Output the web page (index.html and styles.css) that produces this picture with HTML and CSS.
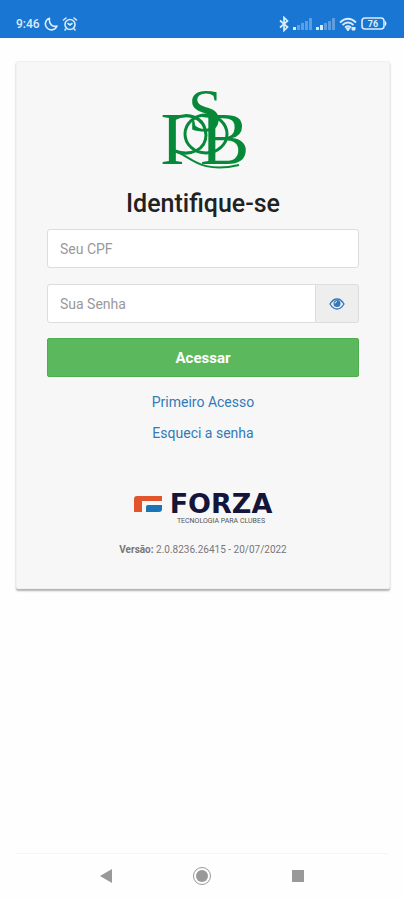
FILE: index.html
```
<!DOCTYPE html>
<html lang="pt-BR">
<head>
  <meta charset="UTF-8" />
  <title>Identifique-se</title>
  <meta name="viewport" content="width=device-width, initial-scale=1.0" />
  <link rel="stylesheet" href="styles.css">
</head>
<body>
  <header class="status-bar">
    <div class="status-group">
      <span class="clock">9:46</span>
      <svg width="14" height="14" viewBox="0 0 14 14" fill="none" stroke="currentColor" stroke-width="1.6" stroke-linejoin="round">
        <path d="M5.5 1.2A6 6 0 1 0 13 9C8.500 10.500 4.500 7 5.500 1.200Z" />
      </svg>
      <svg class="alarm" width="16" height="14" viewBox="0 0 16 14" fill="none" stroke="currentColor" stroke-width="1.6" stroke-linecap="round">
        <circle cx="8" cy="7.500" r="5" />
        <path d="M1.500 3 4 1M14.500 3 12 1M3.800 12 3 13M12.200 12 13 13M6 6.500 8 8 10 6.500" />
      </svg>
    </div>
    <div class="status-group">
      <svg width="10" height="16" viewBox="0 0 10 16" fill="none" stroke="currentColor" stroke-width="1.700">
        <path d="M1 4.500 8.500 11 5 14.500V1.500L8.500 5 1 11.500" />
      </svg>
      <svg width="19" height="12" viewBox="0 0 19 12" fill="currentColor">
        <path d="M0 9h3v3H0z" />
        <path opacity=".35" d="M4 7h3v5H4zM8 5h3v7H8zM12 3h3v9h-3zM16 0h3v12h-3z" />
      </svg>
      <svg width="19" height="12" viewBox="0 0 19 12" fill="currentColor">
        <path d="M0 9h3v3H0zM4 7h3v5H4z" />
        <path opacity=".35" d="M8 5h3v7H8zM12 3h3v9h-3zM16 0h3v12h-3z" />
      </svg>
      <svg width="18" height="15" viewBox="0 0 18 15" fill="none" stroke="currentColor" stroke-width="1.800">
        <path d="M1 5.500Q9-2 17 5.500M3.500 8Q9 3 14.500 8M6 10.500Q9 8 12 10.500" />
        <path d="M7 11h4l-2 3zM13 10v3h3v-3" fill="currentColor" stroke-width="1" />
      </svg>
      <svg width="27" height="14" viewBox="0 0 27 14">
        <rect x="1" y="1" width="22" height="11" rx="3" fill="none" stroke="currentColor" stroke-width="1.600" />
        <path d="M24 3.500q3 3 0 6z" fill="currentColor" />
        <text class="battery-level" x="12" y="10" text-anchor="middle">76</text>
      </svg>
    </div>
  </header>

  <main class="content">
    <form class="login-card">
      <svg class="club-logo" width="84" height="82" viewBox="0 0 84 82" role="img" aria-label="RSB">
        <g class="club-letters">
          <text x="-1" y="75" font-size="74">I</text>
          <text x="27" y="42" font-size="62">S</text>
          <text x="39" y="75" font-size="74">B</text>
        </g>
        <g class="club-curves">
          <path d="M13 30C26 23 44 27 45 46 45 60 30 68 14 62" />
          <ellipse cx="45" cy="45" rx="21" ry="19" />
          <path stroke-width="2" d="M12 62C28 64 36 86 78 76" />
        </g>
      </svg>

      <h1>Identifique-se</h1>

      <input class="field" type="text" placeholder="Seu CPF" aria-label="Seu CPF">

      <div class="password-group">
        <input class="field" type="password" placeholder="Sua Senha" aria-label="Sua Senha">
        <button class="toggle-password" type="button" aria-label="Mostrar senha">
          <svg width="16" height="12" viewBox="0 0 16 12" fill="none" stroke="currentColor">
            <path d="M1 6Q4 1 8 1t7 5Q12 11 8 11T1 6Z" stroke-width="1.300" />
            <circle cx="8" cy="5.500" r="3.500" fill="currentColor" stroke="none" />
            <path d="M6 5.500Q6 3.500 8 3.500" stroke="#eee" />
          </svg>
        </button>
      </div>

      <button class="submit" type="submit">Acessar</button>

      <nav class="links">
        <a href="#">Primeiro Acesso</a>
        <a href="#">Esqueci a senha</a>
      </nav>

      <div class="brand">
        <svg width="28" height="16" viewBox="0 0 28 16">
          <path fill="#e2542c" d="M3 0h25v5H8v11H0V3q0-3 3-3z" />
          <path fill="#1b75b4" d="M14 9h14v4q0 3-3 3H12v-5q0-2 2-2z" />
        </svg>
        <span class="brand-name">FORZA</span>
        <span class="brand-tagline">TECNOLOGIA PARA CLUBES</span>
      </div>

      <p class="version"><strong>Versão:</strong> 2.0.8236.26415 - 20/07/2022</p>
    </form>
  </main>

  <footer class="nav-bar">
    <button type="button" aria-label="Voltar">
      <svg width="20" height="20" viewBox="0 0 20 20"><path fill="currentColor" d="M16 3v14L4 10z" /></svg>
    </button>
    <button type="button" aria-label="Início">
      <svg width="20" height="20" viewBox="0 0 20 20">
        <circle cx="10" cy="10" r="8.500" fill="none" stroke="currentColor" />
        <circle cx="10" cy="10" r="6" fill="currentColor" />
      </svg>
    </button>
    <button type="button" aria-label="Recentes">
      <svg width="20" height="20" viewBox="0 0 20 20"><path fill="currentColor" d="M4 4h12v12H4z" /></svg>
    </button>
  </footer>
</body>
</html>
```
FILE: styles.css
```
* {
  box-sizing: border-box;
}

body {
  margin: 0;
  min-height: 100vh;
  display: flex;
  flex-direction: column;
  background: #fefefe;
  color: #222;
  font-family: Roboto, sans-serif;
  font-size: 14px;
}

svg {
  display: block;
}

button {
  font-family: inherit;
  cursor: pointer;
}

.status-bar {
  display: flex;
  justify-content: space-between;
  align-items: center;
  padding: 12px 16px 2px;
  height: 38px;
  background: #1976d2;
  color: #d9ecfb;
}

.status-group {
  display: flex;
  align-items: center;
  gap: 4px;
}

.clock {
  font-size: 12px;
  font-weight: 500;
}

.battery-level {
  fill: currentColor;
  font-size: 9px;
  font-weight: 700;
}

.content {
  flex: 1;
  padding: 23px 14px 23px 16px;
}

.login-card {
  display: flex;
  flex-direction: column;
  padding: 27px 30px 31px;
  background: #f7f7f7;
  border: 1px solid #f0f0f0;
  border-radius: 2px;
  box-shadow: 0 2px 2px rgba(0, 0, 0, 0.3);
}

.club-logo {
  align-self: center;
  overflow: visible;
}

.club-letters {
  fill: #07893a;
  font-family: "Liberation Serif", serif;
}

.club-curves {
  fill: none;
  stroke: #07893a;
  stroke-width: 3;
}

h1 {
  margin: 17px 0 9px;
  font-size: 25px;
  font-weight: 500;
  line-height: 32px;
  text-align: center;
}

.field {
  width: 100%;
  height: 39px;
  padding: 0 12px;
  border: 1px solid #ddd;
  border-radius: 3px;
  background: #fff;
  font-family: inherit;
  font-size: 14px;
}

.field::placeholder {
  color: #999;
}

.password-group {
  display: flex;
  margin: 16px 0 15px;
}

.password-group .field {
  flex: 1;
  min-width: 0;
  border-radius: 3px 0 0 3px;
}

.toggle-password {
  display: flex;
  justify-content: center;
  align-items: center;
  width: 43px;
  padding: 0;
  border: 1px solid #ddd;
  border-left: 0;
  border-radius: 0 3px 3px 0;
  background: #eee;
  color: #337ab7;
}

.submit {
  height: 39px;
  border: 1px solid #4cae4c;
  border-radius: 2px;
  background: #5cb85c;
  color: #fff;
  font-size: 15px;
  font-weight: 700;
}

.links {
  display: flex;
  flex-direction: column;
  align-items: center;
  gap: 11px;
  margin-top: 15px;
  line-height: 20px;
}

.links a {
  color: #337ab7;
  text-decoration: none;
}

.brand {
  display: grid;
  grid-template-columns: auto auto;
  justify-content: center;
  align-items: center;
  column-gap: 8px;
  margin-top: 47px;
}

.brand-name {
  color: #14153a;
  font-family: "DejaVu Sans", sans-serif;
  font-size: 27px;
  font-weight: 700;
  line-height: 27px;
}

.brand-tagline {
  grid-column: 2;
  justify-self: center;
  color: #555;
  font-size: 7px;
  line-height: 8px;
}

.version {
  margin: 18px 0 0;
  color: #777;
  font-size: 10px;
  line-height: 14px;
  text-align: center;
}

.nav-bar {
  display: flex;
  justify-content: space-between;
  margin: 0 16px;
  padding: 12px 80px 14px;
  border-top: 1px solid #f5f5f5;
}

.nav-bar button {
  padding: 0;
  border: 0;
  background: none;
  color: #999;
}
```
